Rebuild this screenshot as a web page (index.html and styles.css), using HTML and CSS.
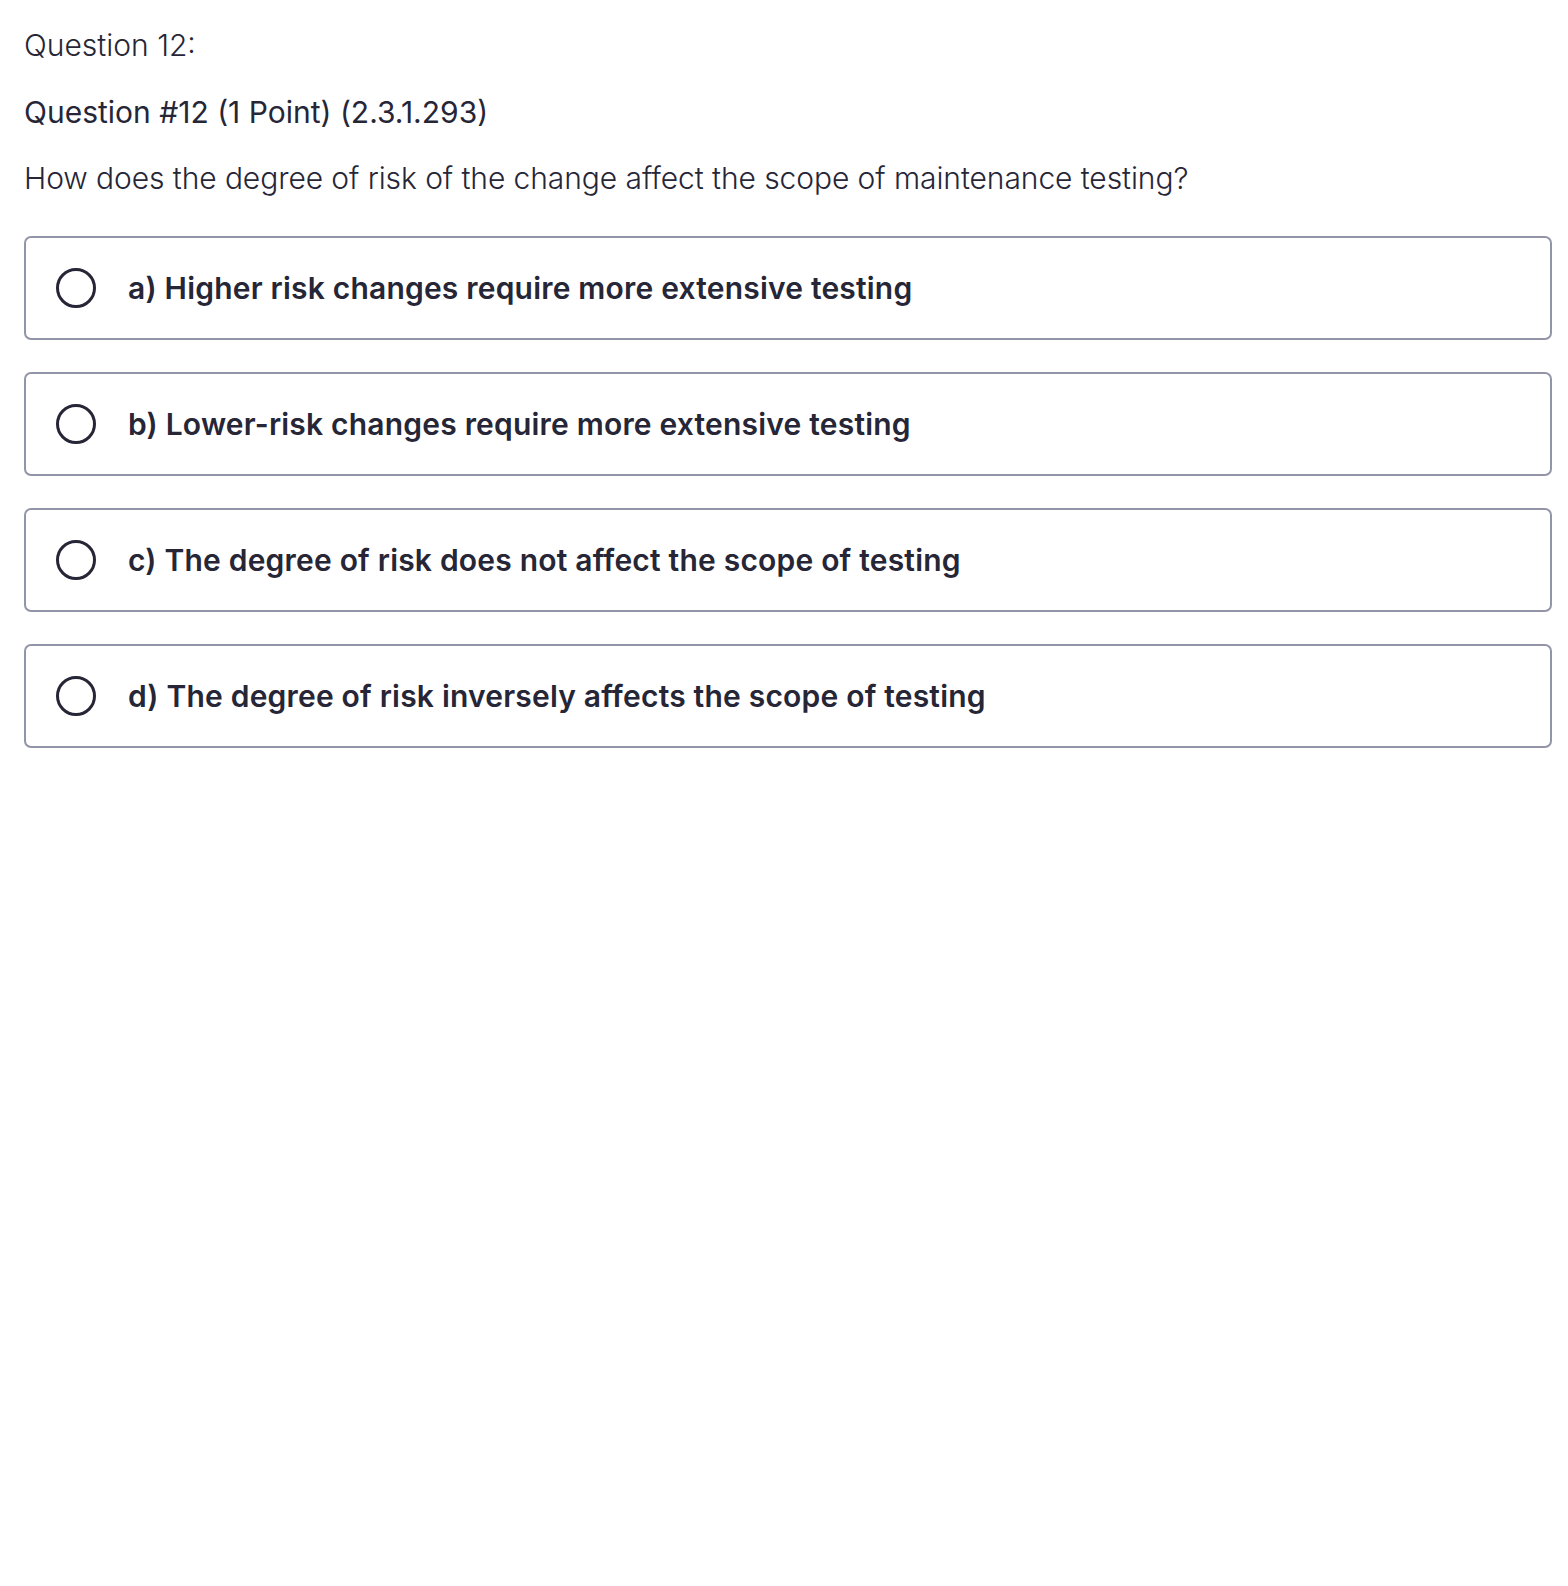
FILE: index.html
```html
<!DOCTYPE html>
<html lang="en">
<head>
<meta charset="utf-8">
<title>Question 12</title>
<link rel="stylesheet" href="styles.css">
</head>
<body>
<main class="quiz">
  <p class="q-label">Question 12:</p>
  <p class="q-title">Question #12 (1 Point) (2.3.1.293)</p>
  <p class="q-text">How does the degree of risk of the change affect the scope of maintenance testing?</p>
  <div class="options">
    <label class="option"><span class="radio"></span><span class="opt-text">a) Higher risk changes require more extensive testing</span></label>
    <label class="option"><span class="radio"></span><span class="opt-text">b) Lower-risk changes require more extensive testing</span></label>
    <label class="option"><span class="radio"></span><span class="opt-text">c) The degree of risk does not affect the scope of testing</span></label>
    <label class="option"><span class="radio"></span><span class="opt-text">d) The degree of risk inversely affects the scope of testing</span></label>
  </div>
</main>
</body>
</html>
```
FILE: styles.css
```css
html, body {
  margin: 0;
  padding: 0;
  background: #ffffff;
}
body {
  font-family: Inter, Roboto, "Liberation Sans", sans-serif;
  color: #262637;
}
.quiz {
  padding: 25px 16px 0 24px;
  display: flex;
  flex-direction: column;
}
.quiz p {
  margin: 0;
  font-size: 30px;
  line-height: 40px;
}
.q-label {
  font-weight: 300;
}
.q-title {
  margin-top: 27px !important;
  font-weight: 400;
}
.q-text {
  margin-top: 26px !important;
  font-weight: 300;
  letter-spacing: -0.08px;
}
.options {
  margin-top: 38px;
  display: flex;
  flex-direction: column;
  gap: 32px;
}
.option {
  box-sizing: border-box;
  height: 104px;
  border: 2px solid #9295aa;
  border-radius: 7px;
  display: flex;
  align-items: center;
  padding-left: 30px;
  gap: 32px;
}
.radio {
  box-sizing: border-box;
  width: 40px;
  height: 40px;
  border: 3.5px solid #262637;
  border-radius: 50%;
  flex: none;
}
.opt-text {
  font-size: 30px;
  line-height: 40px;
  font-weight: 600;
  letter-spacing: 0.2px;
}
```
